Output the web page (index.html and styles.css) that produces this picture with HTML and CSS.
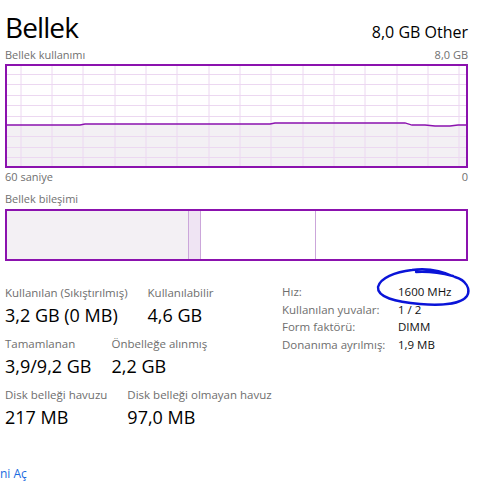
FILE: index.html
```html
<!DOCTYPE html>
<html lang="tr">

<head>
    <meta charset="UTF-8">
    <meta name="viewport" content="width=device-width, initial-scale=1.0">
    <title>Bellek</title>
    <link rel="stylesheet" href="styles.css">
</head>

<body>
    <div class="page">
        <div class="header">
            <h1>Bellek</h1>
            <span class="total">8,0 GB Other</span>
        </div>

        <div class="chart-caption">
            <span>Bellek kullanımı</span>
            <span>8,0 GB</span>
        </div>
        <div class="chart">
            <svg width="463" height="104" viewBox="0 0 463 104">
                <polygon class="usage-fill" points="1,61 75,61 80,60 265,60 270,59 400,59 407,61 420,61 430,62 445,62 453,61 462,61 462,103 1,103" />
                <g class="grid">
                    <line x1="16" y1="0" x2="16" y2="104" />
                    <line x1="47" y1="0" x2="47" y2="104" />
                    <line x1="78" y1="0" x2="78" y2="104" />
                    <line x1="110" y1="0" x2="110" y2="104" />
                    <line x1="141" y1="0" x2="141" y2="104" />
                    <line x1="172" y1="0" x2="172" y2="104" />
                    <line x1="204" y1="0" x2="204" y2="104" />
                    <line x1="235" y1="0" x2="235" y2="104" />
                    <line x1="266" y1="0" x2="266" y2="104" />
                    <line x1="298" y1="0" x2="298" y2="104" />
                    <line x1="329" y1="0" x2="329" y2="104" />
                    <line x1="360" y1="0" x2="360" y2="104" />
                    <line x1="392" y1="0" x2="392" y2="104" />
                    <line x1="423" y1="0" x2="423" y2="104" />
                    <line x1="454" y1="0" x2="454" y2="104" />
                    <line x1="0" y1="10.5" x2="463" y2="10.5" />
                    <line x1="0" y1="20.5" x2="463" y2="20.5" />
                    <line x1="0" y1="31.5" x2="463" y2="31.5" />
                    <line x1="0" y1="41.5" x2="463" y2="41.5" />
                    <line x1="0" y1="52.5" x2="463" y2="52.5" />
                    <line x1="0" y1="72.5" x2="463" y2="72.5" />
                    <line x1="0" y1="83.5" x2="463" y2="83.5" />
                    <line x1="0" y1="93.5" x2="463" y2="93.5" />
                </g>
                <polyline class="usage-line" points="1,61 75,61 80,60 265,60 270,59 400,59 407,61 420,61 430,62 445,62 453,61 462,61" />
                <rect class="frame" x="1" y="1" width="461" height="102" />
            </svg>
        </div>
        <div class="chart-axis">
            <span>60 saniye</span>
            <span>0</span>
        </div>

        <div class="chart-caption composition-caption">
            <span>Bellek bileşimi</span>
        </div>
        <div class="composition">
            <div class="seg seg-inuse"></div>
            <div class="seg seg-modified"></div>
            <div class="seg seg-standby"></div>
            <div class="seg seg-free"></div>
        </div>

        <div class="details">
            <div class="stats">
                <div class="stat-row">
                    <div class="stat">
                        <div class="stat-label">Kullanılan (Sıkıştırılmış)</div>
                        <div class="stat-value">3,2 GB (0 MB)</div>
                    </div>
                    <div class="stat">
                        <div class="stat-label">Kullanılabilir</div>
                        <div class="stat-value">4,6 GB</div>
                    </div>
                </div>
                <div class="stat-row">
                    <div class="stat">
                        <div class="stat-label">Tamamlanan</div>
                        <div class="stat-value">3,9/9,2 GB</div>
                    </div>
                    <div class="stat">
                        <div class="stat-label">Önbelleğe alınmış</div>
                        <div class="stat-value">2,2 GB</div>
                    </div>
                </div>
                <div class="stat-row">
                    <div class="stat">
                        <div class="stat-label">Disk belleği havuzu</div>
                        <div class="stat-value">217 MB</div>
                    </div>
                    <div class="stat">
                        <div class="stat-label">Disk belleği olmayan havuz</div>
                        <div class="stat-value">97,0 MB</div>
                    </div>
                </div>
            </div>

            <table class="props">
                <tr>
                    <td>Hız:</td>
                    <td>1600 MHz</td>
                </tr>
                <tr>
                    <td>Kullanılan yuvalar:</td>
                    <td>1 / 2</td>
                </tr>
                <tr>
                    <td>Form faktörü:</td>
                    <td>DIMM</td>
                </tr>
                <tr>
                    <td>Donanıma ayrılmış:</td>
                    <td>1,9 MB</td>
                </tr>
            </table>
        </div>

        <a class="monitor-link" href="#">ni Aç</a>
    </div>

    <!-- hand-drawn marker around the speed value -->
    <svg class="scribble" width="481" height="491" viewBox="0 0 481 491">
        <path d="M455 277 C440 270 425 268 412 270 C395 272 380 278 378 287 C377 297 395 302 420 304 C445 306 462 303 467 296 C471 289 466 280 455 277 M416 272 C430 271 445 274 453 276" />
    </svg>
</body>

</html>
```

FILE: styles.css
```css
/* Task manager memory panel */
body {
    margin: 0;
    padding: 0;
    font-family: 'Open Sans', 'Noto Sans', Arial, sans-serif;
    background-color: #ffffff;
    color: #000000;
}

.page {
    width: 463px;
    padding: 0 13px 0 5px;
}

.header {
    display: flex;
    justify-content: space-between;
    align-items: baseline;
    height: 46px;
}

h1 {
    margin: 0;
    font-size: 28px;
    font-weight: 400;
    line-height: 54px;
    letter-spacing: -0.9px;
}

.total {
    font-size: 16px;
}

.chart-caption {
    display: flex;
    justify-content: space-between;
    font-size: 11px;
    line-height: 18px;
    color: #707070;
}

.chart {
    height: 104px;
}

.chart svg {
    display: block;
}

.grid line {
    stroke: #ecd8f1;
    stroke-width: 1;
}

.usage-fill {
    fill: #f3f0f4;
}

.usage-line {
    fill: none;
    stroke: #8b12ae;
    stroke-width: 1.3;
}

.frame {
    fill: none;
    stroke: #8b12ae;
    stroke-width: 2;
}

.chart-axis {
    display: flex;
    justify-content: space-between;
    font-size: 11px;
    line-height: 18px;
    color: #707070;
}

.composition-caption {
    margin-top: 4px;
    height: 19px;
}

.composition {
    display: flex;
    height: 48px;
    border: 2px solid #8b12ae;
}

.seg {
    height: 100%;
    border-right: 1px solid #cba6da;
}

.seg-inuse {
    width: 181px;
    background-color: #f3f0f4;
}

.seg-modified {
    width: 11px;
    background-color: #efe4f3;
}

.seg-standby {
    width: 114px;
}

.seg-free {
    flex: 1;
    border-right: none;
}

.details {
    display: grid;
    grid-template-columns: 277px auto;
    align-items: start;
    margin-top: 23px;
}

.stats {
    display: flex;
    flex-direction: column;
    gap: 6px;
}

.stat-row {
    display: flex;
    gap: 20px;
}

.stat-label {
    font-size: 11.5px;
    line-height: 17px;
    color: #6e6e6e;
}

.stat-value {
    font-size: 18px;
    line-height: 28px;
}

.props {
    border-collapse: collapse;
    margin-top: -1px;
}

.props td {
    padding: 0;
    font-size: 11.5px;
    line-height: 17.5px;
    color: #111111;
}

.props td:first-child {
    color: #6e6e6e;
    width: 116px;
}

.monitor-link {
    display: block;
    margin: 34px 0 0 -5px;
    font-size: 12px;
    color: #1a6be0;
    text-decoration: none;
}

.scribble {
    position: absolute;
    top: 0;
    left: 0;
    pointer-events: none;
}

.scribble path {
    fill: none;
    stroke: #0a14d8;
    stroke-width: 2.4;
    stroke-linecap: round;
    stroke-linejoin: round;
}
```
